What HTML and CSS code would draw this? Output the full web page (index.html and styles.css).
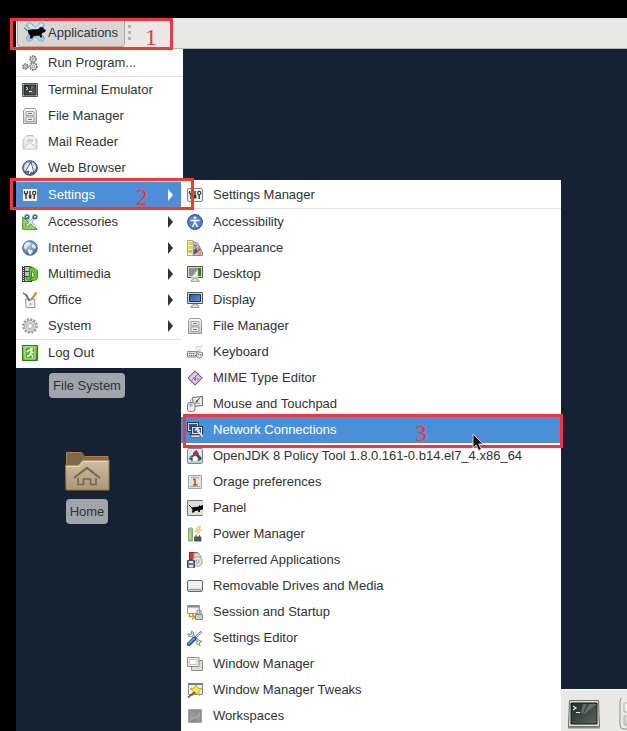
FILE: index.html
```html
<!DOCTYPE html>
<html lang="en">
<head>
    <meta charset="UTF-8">
    <meta name="viewport" content="width=device-width, initial-scale=1.0">
    <title>Xfce Applications Menu</title>
    <link rel="stylesheet" href="styles.css">
</head>
<body>

<!-- Icon set -->
<svg class="sprite" aria-hidden="true">
    <defs>
        <linearGradient id="g-metal" x1="0" y1="0" x2="0" y2="1"><stop offset="0" stop-color="#fafaf9"/><stop offset="1" stop-color="#c9cac5"/></linearGradient>
        <linearGradient id="g-term" x1="0" y1="0" x2="1" y2="1"><stop offset="0" stop-color="#1f2a27"/><stop offset="1" stop-color="#59665f"/></linearGradient>
        <linearGradient id="g-screen" x1="0" y1="0" x2="1" y2="1"><stop offset="0" stop-color="#2c5b9f"/><stop offset="1" stop-color="#5b93d8"/></linearGradient>
        <radialGradient id="g-globe" cx=".4" cy=".3" r=".8"><stop offset="0" stop-color="#b9cfe8"/><stop offset="1" stop-color="#2d5794"/></radialGradient>
        <linearGradient id="g-green" x1="0" y1="0" x2="1" y2="1"><stop offset="0" stop-color="#8ee04a"/><stop offset="1" stop-color="#3a9210"/></linearGradient>
        <linearGradient id="g-folder" x1="0" y1="0" x2="0" y2="1"><stop offset="0" stop-color="#cdbfa6"/><stop offset="1" stop-color="#a8977a"/></linearGradient>
    </defs>

    <symbol id="mouse" viewBox="0 0 24 24">
        <path d="M6 5l13 14M19 5L6 19" stroke="#7ba3b8" stroke-width="7" stroke-linecap="round"/>
        <path d="M6 5l13 14M19 5L6 19" stroke="#8fd6f4" stroke-width="5.500" stroke-linecap="round"/>
        <path d="M6 4l6 6 7-6" fill="none" stroke="#cdeefb" stroke-width="3" stroke-linecap="round"/>
        <path d="M0 7l4 4" stroke="#222" stroke-width="1"/>
        <path d="M4 10l5-1 5 0 3-1 0-2 2 1 1-1 1 2 3 2-1 2-3 1-1 2 1 3h-2l-1-2-4 0-3 1-1 2H6l1-3-2-2z" fill="#050505"/>
    </symbol>

    <symbol id="run" viewBox="0 0 16 16">
        <g fill="#f3f3f2" stroke="#6d6f6b" stroke-width="1.500" stroke-dasharray="1.900 .6">
            <circle cx="11" cy="4" r="3"/><circle cx="3.500" cy="11.500" r="2.500"/><circle cx="11.500" cy="11.500" r="3.400"/>
        </g>
        <g fill="#fff" stroke="#777" stroke-width=".8"><circle cx="11" cy="4" r="1.200"/><circle cx="3.500" cy="11.500" r="1"/><circle cx="11.500" cy="11.500" r="1.400"/></g>
    </symbol>

    <symbol id="terminal" viewBox="0 0 16 16">
        <path d="M.5 1.500h15v13H.5z" fill="#d3d7cf" stroke="#555753"/>
        <path d="M2 3h12v10H2z" fill="url(#g-term)" stroke="#222"/>
        <path d="M4 5l2 1.500L4 8M7 9.500h3" fill="none" stroke="#eee"/>
        <path d="M9 4h4L9 8z" fill="#7d8985" opacity=".6"/>
    </symbol>

    <symbol id="cabinet" viewBox="0 0 16 16">
        <path d="M3 .5h10L14.500 3v12.500h-13V3z" fill="url(#g-metal)" stroke="#999b96"/>
        <path d="M4 3.500h8v4H4zM4 9h8v4.500H4z" fill="#eeeeec" stroke="#a0a29d"/>
        <path d="M6 5.500h4M6 11.500h4" stroke="#777973"/>
    </symbol>

    <symbol id="mail" viewBox="0 0 16 16">
        <path d="M1 6l4-4.500h6L15 6v9H1z" fill="#e6e7e3" stroke="#c0c2bc"/>
        <path d="M3 3h10v7H3z" fill="#f4f4f2"/>
        <path d="M1.500 14.500L7 9q1-1 2 0l5.500 5.500" fill="#f2f2f0" stroke="#c9cbc6"/>
        <path d="M4 9q0-4 4-4 3 0 4 2l-2 1q-3-2-6 1" fill="#c5c8c2"/>
    </symbol>

    <symbol id="browser" viewBox="0 0 16 16">
        <circle cx="8" cy="8" r="7.300" fill="url(#g-globe)" stroke="#28497b"/>
        <path d="M2 8q1-5 5-5l-1 4-3 5zM10 2q4 2 4 6l-2 4-2-4z" fill="#dde7ef"/>
        <path d="M9 2l3 11-3-1-1 3-2-1 1-3-4 1z" fill="#fff" stroke="#334761" stroke-width=".8"/>
    </symbol>

    <symbol id="settings" viewBox="0 0 16 16">
        <rect x=".5" y="1.500" width="15" height="13" rx="1.500" fill="#eeeeec" stroke="#85877f"/>
        <path d="M4 6v6M8 4v7M12.200 7v5" stroke="#383a37" stroke-width="1.400"/>
        <path d="M2.500 4v2L4 7.500 5.500 6V4" fill="none" stroke="#383a37" stroke-width="1.300"/>
        <rect x="6.800" y="8" width="2.600" height="3.500" fill="#383a37"/>
        <circle cx="12.200" cy="6" r="1.600" fill="#fff" stroke="#383a37" stroke-width="1.200"/>
    </symbol>

    <symbol id="accessories" viewBox="0 0 16 16">
        <path d="M.700 3v12.300H15.300z" fill="#8bdc58" stroke="#43961b"/>
        <path d="M3.500 9v3.500h4z" fill="#e9f9df" stroke="#43961b" stroke-width=".7"/>
        <path d="M12 4L5 12M5 4l8 9" stroke="#6f7674" stroke-width="2.600"/>
        <path d="M12 4L5 12M5 4l8 9" stroke="#f2f2f2" stroke-width="1.300"/>
        <g fill="none" stroke="#3465a4" stroke-width="1.700"><circle cx="5" cy="2.800" r="1.800"/><circle cx="13" cy="2.800" r="1.800"/></g>
    </symbol>

    <symbol id="globe" viewBox="0 0 16 16">
        <circle cx="8" cy="8" r="7.300" fill="url(#g-globe)" stroke="#4b6d9c"/>
        <path d="M2 5l3-3 4 1-1 2-3 2-1 3-2-2zM10 4l3 1 1 3-2 1-2-2zM6 9l4 1 1 2-3 3-2-3z" fill="#e4ebf0"/>
    </symbol>

    <symbol id="multimedia" viewBox="0 0 16 16">
        <path d="M0 0h10v16H0z" fill="#3d423f"/>
        <path d="M3 1h5v4H3zM3 6h5v4H3zM3 11h5v4H3z" fill="#b4bfc4"/>
        <path d="M1.500 0v16M9.200 0v16" stroke="#e8e8e8" stroke-dasharray="1 1"/>
        <path d="M9 1.500h2l4.500 3v8l-3 2H9l-1-2 1.500-1.500H12V7L9.500 5.500V12l-2 2H5l-1-2 1.500-1.500H7.500V1.500z" fill="#62cc22" stroke="#2c7b08" stroke-width=".8"/>
    </symbol>

    <symbol id="office" viewBox="0 0 16 16">
        <path d="M3.500 7h9L13 15.500H4z" fill="#f0f0ef" stroke="#9b9d98"/>
        <path d="M1 1q3 1 6 8M4 2l4 7" fill="none" stroke="#72746f" stroke-width="1.400"/>
        <path d="M14.500 .5L9 8" stroke="#a56a21" stroke-width="2"/>
        <path d="M14 1L9 8" stroke="#e9b96e" stroke-width=".8"/>
        <circle cx="8.500" cy="12" r="1.500" fill="#b7cbe1"/>
    </symbol>

    <symbol id="gear" viewBox="0 0 16 16">
        <circle cx="8" cy="8" r="6.800" fill="none" stroke="#999b97" stroke-width="2" stroke-dasharray="2.200 1.360"/>
        <circle cx="8" cy="8" r="4.700" fill="#e6e6e4" stroke="#939591" stroke-width="2.400"/>
        <circle cx="8" cy="8" r="4.500" fill="none" stroke="#dcdddb" stroke-width="1.500"/>
        <circle cx="8" cy="8" r="2.500" fill="#fff" stroke="#999b96" stroke-width=".8"/>
    </symbol>

    <symbol id="logout" viewBox="0 0 16 16">
        <path d="M.5 .5h15v15H.5z" fill="url(#g-green)" stroke="#2d7d08"/>
        <path d="M3 2h10v12H3z" fill="#59b52b" stroke="#d8f3c5" stroke-width=".8"/>
        <circle cx="9.500" cy="4" r="1.300" fill="#fff"/>
        <path d="M5 7l2-2 2.500 1-1 3 2 1.500V13M8.500 9L7 11H5M9.500 6.500l2 1.500" fill="none" stroke="#fff" stroke-width="1.300"/>
    </symbol>

    <symbol id="access" viewBox="0 0 16 16">
        <circle cx="8" cy="8" r="7.400" fill="#5184c6" stroke="#204a87"/>
        <circle cx="8" cy="3.800" r="1.400" fill="#fff"/>
        <path d="M3.500 6.500h9M8 6v4M7.500 9L5.500 13M8.500 9l2 4" stroke="#fff" stroke-width="1.500"/>
    </symbol>

    <symbol id="appearance" viewBox="0 0 16 16">
        <path d="M6 1.500l5 2 4.500 9v3H6z" fill="#c9c9c5" stroke="#8a8a88"/>
        <path d="M7 4l3 1-2 4zM12 7l2 3-5 3z" fill="#8a70aa"/>
        <path d="M11 5l1 3-4 4zM14 11l1 3-6 1z" fill="#ec9c4a"/>
        <path d="M6.500 10l3-2 1 4-4 3z" fill="#5b5168"/>
        <path d="M.5 .5H6v15H.5z" fill="#f3f3ef" stroke="#a5a69f"/>
        <path d="M1.500 2H5v3H1.500zM1.500 6H5v3H1.500z" fill="#f2d818"/><path d="M1.500 10H5v3H1.500z" fill="#d2bd4b"/>
    </symbol>

    <symbol id="desktop" viewBox="0 0 16 16">
        <path d="M.5 .5h15v11H.5z" fill="#d3d7cf" stroke="#555753"/>
        <path d="M2 2h12v8H2z" fill="#8d938c"/><path d="M11 2h3v8h-3z" fill="#30820f"/>
        <path d="M4 12l7-9v9z" fill="#f0eee3" stroke="#aaa990" stroke-width=".6"/>
        <path d="M6 12h4v2h2v1.500H4V14h2z" fill="#e2e2df" stroke="#888" stroke-width=".7"/>
    </symbol>

    <symbol id="display" viewBox="0 0 16 16">
        <path d="M.5 .5h15v11H.5z" fill="#d3d7cf" stroke="#555753"/>
        <path d="M2.500 2.500h11v7h-11z" fill="url(#g-screen)" stroke="#163469"/>
        <path d="M6 12h4v2h2v1.500H4V14h2z" fill="#e2e2df" stroke="#777" stroke-width=".7"/>
    </symbol>

    <symbol id="keyboard" viewBox="0 0 16 16">
        <path d="M8 5q2-4 4-2t3-2M9 6h5" fill="none" stroke="#c4c4c4"/>
        <path d="M.5 7.500h9V13h-9zM10 7.500l5.500 1V12l-3 2.500-3-2z" fill="#deded9" stroke="#8a8c87"/>
        <path d="M2 9.500h6M2 11.500h7M11 10l4 1" stroke="#6b6d69" stroke-width="1.200" stroke-dasharray="1.200 .8"/>
    </symbol>

    <symbol id="mime" viewBox="0 0 16 16">
        <path d="M8 .8L15.200 8 8 15.200.8 8z" fill="#c8b4cf" stroke="#6b4575"/>
        <path d="M8 3l5 5-5 5-5-5z" fill="#dfd0e4"/>
        <path d="M5 10l6-6M6 7l3 4M9 5l-1 6M7 9h5" stroke="#8f6b9a" stroke-width=".9"/>
    </symbol>

    <symbol id="touchpad" viewBox="0 0 16 16">
        <path d="M5.500 1.500l10-1v9l-9 1z" fill="#eeeeec" stroke="#686a66"/>
        <path d="M8 8l1-3 5-4.500-4 6z" fill="#4b4d4a"/>
        <path d="M8 6l5 2" stroke="#999"/>
        <path d="M3.500 7q-1-4 2-5" fill="none" stroke="#aaa"/>
        <rect x=".5" y="6.500" width="7.500" height="9" rx="2.500" fill="#ebebe8" stroke="#777a75"/>
        <path d="M2.500 7.500h3v3h-3z" fill="#85b2e3"/>
    </symbol>

    <symbol id="network" viewBox="0 0 16 16">
        <path d="M.5 .5h11v9H.5zM3 10v2.500h3" fill="#d3d7cf" stroke="#353735"/>
        <path d="M2 2h8v6H2z" fill="#2a5596"/>
        <path d="M4.500 4.500h11v8h-11z" fill="#e2e3de" stroke="#353735"/>
        <path d="M6 6h8v5H6z" fill="#2a5596"/>
        <path d="M4 13h9v2.500H4z" fill="#ddd" stroke="#555" stroke-width=".7"/>
        <path d="M8 8.500l2-2 2 2-2 1M11 9l4.500 5.500" fill="none" stroke="#eceeef" stroke-width="1.600"/>
    </symbol>

    <symbol id="java" viewBox="0 0 16 16">
        <rect x=".5" y=".5" width="15" height="15" rx="1" fill="#dce8f0" stroke="#6d8da5"/>
        <path d="M6 5l3-3 2 2 1 3 3 3-1 2-3 1H5l-3-2 1-3 3-1z" fill="#4a4d4f"/>
        <path d="M6 9l3-1 2 3-1 2H6zM2.500 9.500l2-.5" fill="#fff" stroke="#ddd"/><circle cx="8.500" cy="5.500" r="1.900" fill="#d32b2b"/>
        <path d="M1 13h14v2H1z" fill="#b5d0e2"/>
    </symbol>

    <symbol id="calendar" viewBox="0 0 16 16">
        <path d="M1.500 1.500h13v13h-13z" fill="#e6e4e0" stroke="#a3a29d"/>
        <path d="M4 3.500h8M3 12.500h10" stroke="#999" stroke-dasharray="1.500 .7"/>
        <path d="M6 5.500h2V11M6 11h4.500" fill="none" stroke="#c8432d" stroke-width="1.500"/>
    </symbol>

    <symbol id="panel" viewBox="0 0 16 16">
        <path d="M16 .5H.5v15H16" fill="#deded9" stroke="#777975"/>
        <path d="M2 5l2.500 2.500" stroke="#222"/>
        <path d="M4 7.500l4-.5 4-.5V5l1.500 1L16 5v4.500L13 10v2h-1.500l-.5-1.500-3 .5-1 1.500H5L5.500 10z" fill="#050505"/>
    </symbol>

    <symbol id="power" viewBox="0 0 16 16">
        <path d="M1.500 2.500h4V15h-4z" fill="#88cf5d" stroke="#8aa77b"/><path d="M2.500 1h2v2h-2z" fill="#bbb"/>
        <path d="M3 4v9" stroke="#c7f0ad"/>
        <path d="M11 0L8 5.500h3L9 9.500l6-6h-3l2-3z" fill="#f8d48a" stroke="#edbd70" stroke-width=".6"/>
        <path d="M7.500 11h6.500v4H7.500zM9 11V9M12.500 11V9" fill="#555753" stroke="#555753"/>
    </symbol>

    <symbol id="preferred" viewBox="0 0 16 16">
        <path d="M2.500 .5h8v7h-8z" fill="#df3b2c" stroke="#9c1e16"/>
        <path d="M7 1h4l3 3v3H7z" fill="#d9dad7" stroke="#a0a29d"/>
        <circle cx="10.500" cy="9.500" r="4.800" fill="#e3e3df" stroke="#a0a29d"/><circle cx="10.500" cy="9.500" r="1.500" fill="#fff" stroke="#888"/>
        <path d="M.5 8.500h7v7h-7z" fill="#63799a" stroke="#414e66"/><path d="M2 9h4v2H2zM2 13h4v2.500H2z" fill="#e6e7e8"/>
    </symbol>

    <symbol id="drive" viewBox="0 0 16 16">
        <rect x=".5" y="2.500" width="15" height="11" rx="1.500" fill="url(#g-metal)" stroke="#666863"/>
        <path d="M2 3.500h12v7H2z" fill="#f0f0ee"/><path d="M2 11.500h12" stroke="#999b96"/>
    </symbol>

    <symbol id="session" viewBox="0 0 16 16">
        <path d="M.5 1.500h12v8H.5z" fill="#f2f2f1" stroke="#999b96"/><path d="M1 1.500h11v2H1z" fill="#7089b0"/>
        <path d="M2.500 9.500v3h4M5 10l3 3-3 2.500" fill="none" stroke="#c59a31" stroke-width="1.500"/>
        <path d="M8.500 10.500h7v5h-7z" fill="#cfcfcc" stroke="#888"/><path d="M10 10V7q2-2 4 0v3" fill="none" stroke="#999" stroke-width="1.300"/>
    </symbol>

    <symbol id="tools" viewBox="0 0 16 16">
        <path d="M3 3l10 10" stroke="#7f817d" stroke-width="3"/><path d="M3 3l10 10" stroke="#ededeb" stroke-width="1.500"/>
        <path d="M1 3.500l2 1.500 2-1.500L4.500 1q3 1 2 4L4 7 1 6zM15 11.500l-2 .5-1 2 1.500 1.500q-4 0-4-3l2-2.500z" fill="#ededeb" stroke="#777" stroke-width=".8"/>
        <path d="M14.500 1.500L8 8" stroke="#72746f" stroke-width="2.200"/><path d="M14.500 1.500L8 8" stroke="#eee"/>
        <path d="M7.500 8.500L2 14" stroke="#204a87" stroke-width="4" stroke-linecap="round"/><path d="M7 8.500L2 13.500" stroke="#6d9fd9" stroke-width="2" stroke-linecap="round"/>
    </symbol>

    <symbol id="windows" viewBox="0 0 16 16">
        <path d="M4.500 4.500h11v10h-11z" fill="#deded9" stroke="#8d8f8a"/>
        <path d="M.5 1.500h11.500v9H.5z" fill="#f0f0ee" stroke="#8d8f8a"/>
        <path d="M2.500 3.500h7.500v5H2.500z" fill="#fff" stroke="#c6c7c3"/>
    </symbol>

    <symbol id="tweaks" viewBox="0 0 16 16">
        <path d="M1.500 1.500h14v11h-14z" fill="#f0f0ee" stroke="#888a85"/><path d="M1 1h15v2H1z" fill="#6681a8"/>
        <path d="M9 2.500l1.700 3.700 4.300.3-3.300 2.800 1 4.200L9 11.300l-3.700 2.200 1-4.200L3 6.500l4.300-.3z" fill="#fce94f" stroke="#c4a000" stroke-width=".8"/>
        <path d="M8 10l-7 5.500" stroke="#874c4c" stroke-width="1.600"/>
    </symbol>

    <symbol id="workspaces" viewBox="0 0 16 16">
        <path d="M1.500 1.500h13v13h-13z" fill="#8b8d8a" stroke="#a5a6a3"/>
        <path d="M3 3h5v5H3zM8.500 8.500H13V13H8.500z" fill="#979996"/><path d="M3 13V8.500h5L13 3v5z" fill="#a2a4a1"/>
    </symbol>

    <symbol id="home-folder" viewBox="0 4 48 48">
        <path d="M3.500 40V5.500h15l3 4H45V40z" fill="#7d6a4c" stroke="#b58139"/>
        <path d="M2.500 18h13l4-5H46v30H3z" fill="url(#g-folder)" stroke="#a4712d"/>
        <path d="M4 19.500h12l4-5h24.500" fill="none" stroke="#e2d8c6"/>
        <path d="M11 31l13-10 13 10" fill="none" stroke="#7d6747" stroke-width="2.200"/>
        <path d="M15 31v6.500h5.500V32h7v5.500H33V31" fill="none" stroke="#7d6747" stroke-width="1.600"/>
    </symbol>

    <symbol id="dock-terminal" viewBox="0 0 32 32">
        <path d="M1.500 2.500h29l1 26H.5z" fill="#dcddd9" stroke="#6c6e6a"/>
        <path d="M3 5h26v21H3z" fill="url(#g-term)" stroke="#161d1b"/>
        <path d="M15 6h4l-4 9h-2zM21 6h8L15 17z" fill="#87928e" opacity=".55"/>
        <path d="M5 8l3 2-3 2M8 14.500h4" fill="none" stroke="#eee" stroke-width="1.200"/>
        <path d="M0 29.500h32" stroke="#858783" stroke-width="2"/>
    </symbol>

    <symbol id="dock-files" viewBox="0 0 32 32">
        <rect x="1" y="-1" width="30" height="32" rx="4" fill="#e9e9e6" stroke="#8f918c"/>
        <path d="M5 5h22v9H5zM5 18h22v9H5z" fill="url(#g-metal)" stroke="#b0b1ac"/>
        <path d="M12 9h8M12 22h8" stroke="#666862" stroke-width="2"/>
    </symbol>
</svg>

<main class="screen">
    <header class="top-panel">
        <button class="app-button" type="button">
            <svg class="app-logo"><use href="#mouse"/></svg>Applications
        </button>
        <div class="handle"><i></i><i></i><i></i></div>

        <nav class="menu main-menu">
            <button type="button"><svg><use href="#run"/></svg><span>Run Program...</span></button>
            <hr>
            <button type="button"><svg><use href="#terminal"/></svg><span>Terminal Emulator</span></button>
            <button type="button"><svg><use href="#cabinet"/></svg><span>File Manager</span></button>
            <button type="button"><svg><use href="#mail"/></svg><span>Mail Reader</span></button>
            <button type="button"><svg><use href="#browser"/></svg><span>Web Browser</span></button>
            <hr>
            <button type="button" class="parent active"><svg><use href="#settings"/></svg><span>Settings</span></button>
            <hr>
            <button type="button" class="parent"><svg><use href="#accessories"/></svg><span>Accessories</span></button>
            <button type="button" class="parent"><svg><use href="#globe"/></svg><span>Internet</span></button>
            <button type="button" class="parent"><svg><use href="#multimedia"/></svg><span>Multimedia</span></button>
            <button type="button" class="parent"><svg><use href="#office"/></svg><span>Office</span></button>
            <button type="button" class="parent"><svg><use href="#gear"/></svg><span>System</span></button>
            <hr>
            <button type="button"><svg><use href="#logout"/></svg><span>Log Out</span></button>
        </nav>

        <nav class="menu sub-menu">
            <button type="button"><svg><use href="#settings"/></svg><span>Settings Manager</span></button>
            <hr>
            <button type="button"><svg><use href="#access"/></svg><span>Accessibility</span></button>
            <button type="button"><svg><use href="#appearance"/></svg><span>Appearance</span></button>
            <button type="button"><svg><use href="#desktop"/></svg><span>Desktop</span></button>
            <button type="button"><svg><use href="#display"/></svg><span>Display</span></button>
            <button type="button"><svg><use href="#cabinet"/></svg><span>File Manager</span></button>
            <button type="button"><svg><use href="#keyboard"/></svg><span>Keyboard</span></button>
            <button type="button"><svg><use href="#mime"/></svg><span>MIME Type Editor</span></button>
            <button type="button"><svg><use href="#touchpad"/></svg><span>Mouse and Touchpad</span></button>
            <button type="button" class="active"><svg><use href="#network"/></svg><span>Network Connections</span></button>
            <button type="button"><svg><use href="#java"/></svg><span>OpenJDK 8 Policy Tool 1.8.0.161-0.b14.el7_4.x86_64</span></button>
            <button type="button"><svg><use href="#calendar"/></svg><span>Orage preferences</span></button>
            <button type="button"><svg><use href="#panel"/></svg><span>Panel</span></button>
            <button type="button"><svg><use href="#power"/></svg><span>Power Manager</span></button>
            <button type="button"><svg><use href="#preferred"/></svg><span>Preferred Applications</span></button>
            <button type="button"><svg><use href="#drive"/></svg><span>Removable Drives and Media</span></button>
            <button type="button"><svg><use href="#session"/></svg><span>Session and Startup</span></button>
            <button type="button"><svg><use href="#tools"/></svg><span>Settings Editor</span></button>
            <button type="button"><svg><use href="#windows"/></svg><span>Window Manager</span></button>
            <button type="button"><svg><use href="#tweaks"/></svg><span>Window Manager Tweaks</span></button>
            <button type="button"><svg><use href="#workspaces"/></svg><span>Workspaces</span></button>
        </nav>
    </header>

    <section class="desktop">
        <button type="button" class="shortcut"><span>File System</span></button>
        <button type="button" class="shortcut"><svg><use href="#home-folder"/></svg><span>Home</span></button>
    </section>

    <footer class="dock">
        <button type="button" aria-label="Terminal"><svg><use href="#dock-terminal"/></svg></button>
        <button type="button" aria-label="Files"><svg><use href="#dock-files"/></svg></button>
    </footer>

    <!-- Step markers -->
    <div class="step step1">1</div>
    <div class="step step2">2</div>
    <div class="step step3">3</div>

    <svg class="cursor" viewBox="0 0 12 19"><path d="M1 1v14l3.200-3 2.500 5.500 2.600-1.200L6.800 11H11z" fill="#111" stroke="#ccc"/></svg>
</main>

</body>
</html>
```

FILE: styles.css
```css
/* General styling */
* {
    box-sizing: border-box;
}

body {
    margin: 0;
    padding: 18px 0 0 16px;
    background-color: #000;
    color: #2e3436;
    font-family: "Liberation Sans", Arial, sans-serif;
    font-size: 13px;
}

button {
    border: none;
    background: none;
    padding: 0;
    color: inherit;
    font: inherit;
    text-align: left;
}

svg {
    flex: none;
}

.sprite {
    position: absolute;
    width: 0;
    height: 0;
}

.screen {
    position: relative;
    display: flex;
    flex-direction: column;
    height: calc(100vh - 18px);
    background-color: #152233;
}

/* Top panel */
.top-panel {
    display: flex;
    align-items: flex-start;
    height: 31px;
    background-color: #e8e8e7;
    border-bottom: 1px solid #b5b7b7;
}

.app-button {
    display: flex;
    align-items: center;
    gap: 2px;
    height: 29px;
    margin-left: 1px;
    padding: 0 6px;
    background-color: #d6d6d5;
    border: 1px solid #a9aaa8;
    border-top: none;
    border-radius: 0 0 4px 4px;
}

.app-logo {
    width: 22px;
    height: 22px;
}

.handle {
    display: grid;
    gap: 3px;
    padding: 7px 3px;
}

.handle i {
    width: 3px;
    height: 3px;
    background-color: #b4b4b2;
}

/* Menus */
.menu {
    position: absolute;
    background-color: #fff;
}

.main-menu {
    top: 31px;
    left: 0;
    width: 167px;
    padding: 1px 0 2px;
}

.sub-menu {
    top: 162px;
    bottom: 0;
    left: 165px;
    width: 380px;
    padding-top: 2px;
    overflow: hidden;
}

.menu button {
    display: flex;
    align-items: center;
    gap: 10px;
    width: 100%;
    height: 26px;
    padding: 0 10px 0 6px;
    white-space: nowrap;
}

.menu button svg {
    width: 16px;
    height: 16px;
}

.menu button span {
    padding-bottom: 2px;
}

.menu hr {
    height: 1px;
    margin: 0;
    border: none;
    background-color: #dfdfde;
}

.menu .active {
    background-color: #4a90d9;
    color: #fff;
}

.menu .parent::after {
    content: "";
    margin-left: auto;
    border: 6px solid transparent;
    border-left: 5px solid currentColor;
    border-right: none;
}

/* Desktop */
.desktop {
    display: flex;
    flex: 1;
    flex-direction: column;
    align-items: flex-start;
    gap: 53px;
    padding: 324px 34px 0;
}

.shortcut {
    display: flex;
    flex-direction: column;
    align-items: center;
    width: 74px;
}

.shortcut svg {
    width: 48px;
    height: 48px;
}

.shortcut span {
    padding: 0 4px;
    border-radius: 4px;
    background-color: #a1a5ab;
    line-height: 25px;
    white-space: nowrap;
}

/* Dock */
.dock {
    display: flex;
    gap: 3px;
    height: 42px;
    padding-left: 544px;
    overflow: hidden;
    background: linear-gradient(#fff 1px, #e8e8e7 1px);
    clip-path: inset(0 0 0 545px);
}

.dock button {
    flex: none;
    width: 48px;
    padding: 9px 8px 0;
}

.dock svg {
    width: 32px;
    height: 32px;
}

/* Step markers */
.step {
    position: absolute;
    border: 3px solid #ff3434;
    color: #ff3434;
    font-family: "Liberation Serif", serif;
    font-size: 24px;
    line-height: 32px;
}

.step1 {
    top: 0;
    left: -6px;
    width: 163px;
    height: 32px;
    padding-left: 132px;
}

.step2 {
    top: 160px;
    left: -6px;
    width: 184px;
    height: 32px;
    padding-left: 123px;
}

.step3 {
    top: 396px;
    left: 167px;
    width: 380px;
    height: 34px;
    padding-left: 229px;
}

.cursor {
    position: absolute;
    top: 415px;
    left: 456px;
    width: 12px;
    height: 19px;
}
```
